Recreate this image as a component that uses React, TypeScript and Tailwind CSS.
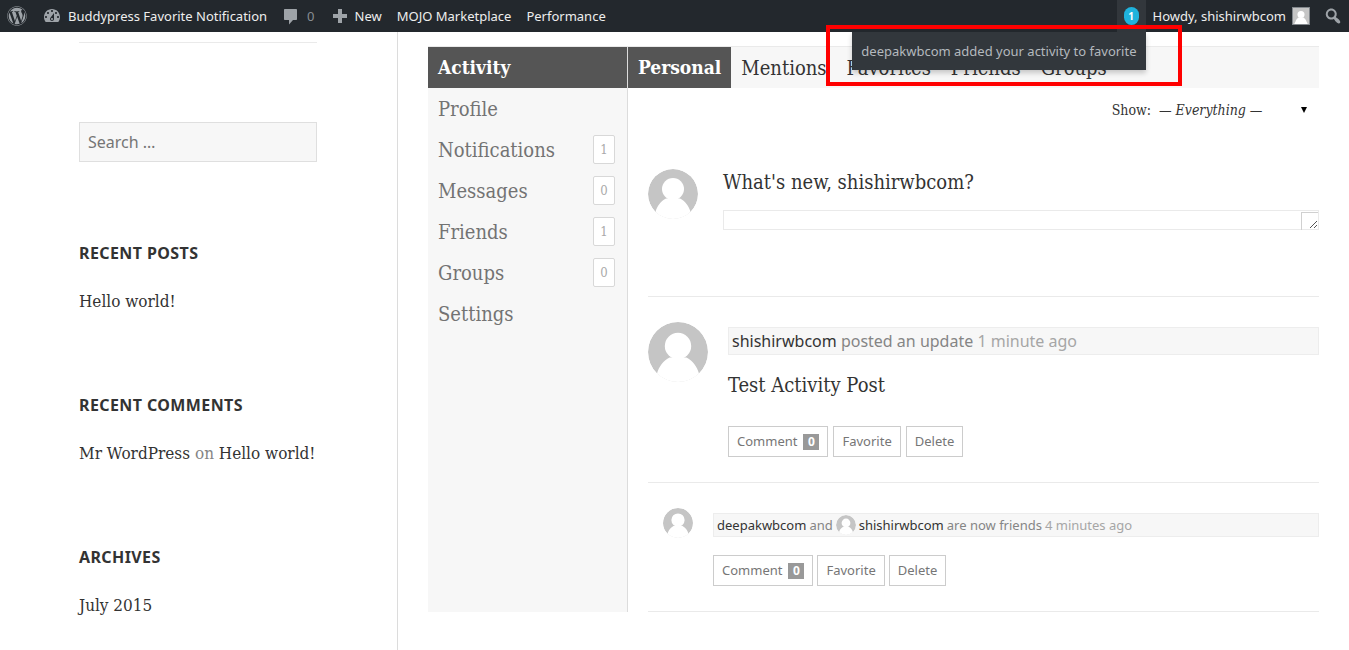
import { type ReactNode } from "react"
import { FaWordpress } from "react-icons/fa"

const navItems = [
  { label: "Profile" },
  { label: "Notifications", count: 1 },
  { label: "Messages", count: 0 },
  { label: "Friends", count: 1 },
  { label: "Groups", count: 0 },
  { label: "Settings" },
]

const subNavItems = ["Mentions", "Favorites", "Friends", "Groups"]

const dashboardPath =
  "M3.76 16h12.48c1.1-1.37 1.76-3.11 1.76-5 0-4.42-3.58-8-8-8s-8 3.58-8 8c0 1.89.66 3.63 1.76 5zM10 4c.55 0 1 .45 1 1s-.45 1-1 1-1-.45-1-1 .45-1 1-1zM6 6c.55 0 1 .45 1 1s-.45 1-1 1-1-.45-1-1 .45-1 1-1zm8 0c.55 0 1 .45 1 1s-.45 1-1 1-1-.45-1-1 .45-1 1-1zm-5.37 5.55L12 7v6c0 1.1-.9 2-2 2s-2-.9-2-2c0-.57.24-1.08.63-1.45zM4 10c.55 0 1 .45 1 1s-.45 1-1 1-1-.45-1-1 .45-1 1-1zm12 0c.55 0 1 .45 1 1s-.45 1-1 1-1-.45-1-1 .45-1 1-1zm-5 3c0-.55-.45-1-1-1s-1 .45-1 1 .45 1 1 1 1-.45 1-1z"
const commentPath = "M4 3h11c.6 0 1 .4 1 1v9c0 .6-.4 1-1 1h-3l-4 4.500V14H4c-.6 0-1-.4-1-1V4c0-.6.4-1 1-1z"
const plusPath = "M17 8v4h-5v5H8v-5H3V8h5V3h4v5z"
const searchPath =
  "M12.14 4.18c1.87 1.87 2.11 4.75.72 6.89.12.1.22.21.36.31.2.16.47.36.81.59.34.24.56.39.66.47.42.31.73.57.94.78.32.32.6.65.84 1 .25.35.44.69.59 1.04.14.35.21.68.18 1-.02.32-.14.59-.36.81s-.49.34-.81.36c-.31.02-.65-.04-.99-.19-.35-.14-.7-.34-1.04-.59-.35-.24-.68-.52-1-.84-.21-.21-.47-.52-.77-.93-.1-.13-.25-.35-.47-.66-.22-.32-.4-.57-.56-.78-.16-.2-.29-.35-.44-.5-2.07 1.09-4.69.76-6.44-.98-2.14-2.15-2.14-5.64 0-7.78 2.15-2.15 5.63-2.15 7.78 0zm-1.41 6.36c1.36-1.37 1.36-3.58 0-4.95-1.37-1.37-3.59-1.37-4.95 0-1.37 1.37-1.37 3.58 0 4.95 1.36 1.37 3.58 1.37 4.95 0z"

export default function App() {
  return (
    <div className="relative flex min-h-screen flex-col overflow-hidden bg-white font-['DejaVu_Serif_Condensed','DejaVu_Serif',serif] text-[#333]">
      <AdminBar />
      <div className="flex flex-1">
        <Sidebar />
        <main className="min-w-0 flex-1 pt-[14px] pr-[30px] pl-[30px]">
          <div className="flex border-t border-[#eaeaea]">
            <ProfileNav />
            <div className="min-w-0 flex-1">
              <SubNav />
              <div className="pl-5">
                <ActivityFilter />
                <WhatsNewForm />
                <ActivityStream />
              </div>
            </div>
          </div>
        </main>
      </div>
      {/* callout frame around the notification flyout */}
      <div className="pointer-events-none absolute top-[25px] right-[167px] z-20 h-[61px] w-[356px] border-4 border-[#ff0000]" />
    </div>
  )
}

function AdminBar() {
  return (
    <header className="z-10 flex h-8 items-center justify-between bg-[#23282d] pr-[6px] pl-[7px] font-['Noto_Sans',sans-serif] text-[13px] leading-8 text-[#eee]">
      <nav className="flex items-center" aria-label="Toolbar">
        <a href="#" aria-label="About WordPress">
          <FaWordpress className="size-5 text-[#9ea3a8]" />
        </a>
        <a href="#" className="ml-[15px] flex items-center gap-[6px]">
          <BarIcon d={dashboardPath} />
          Buddypress Favorite Notification
        </a>
        <a href="#" className="ml-[14px] flex items-center gap-[6px] text-[#888d92]">
          <BarIcon d={commentPath} />0
        </a>
        <a href="#" className="ml-[15px] flex items-center gap-[5px]">
          <BarIcon d={plusPath} />
          New
        </a>
        <a href="#" className="ml-[15px]">MOJO Marketplace</a>
        <a href="#" className="ml-[15px]">Performance</a>
      </nav>
      <div className="flex h-8 items-center">
        <div className="relative flex h-8 items-center bg-[#32373c] px-[7px]">
          <a href="#" className="grid h-[18px] w-[15px] place-items-center rounded-full bg-[#1fb3dd] text-[10px] leading-4 font-bold text-white">1</a>
          <a href="#" className="absolute top-full right-0 bg-[#32373c] px-[9px] py-[9px] leading-5 whitespace-nowrap text-[#b4b9be] shadow-[0_3px_5px_rgba(0,0,0,0.2)]">
            deepakwbcom added your activity to favorite
          </a>
        </div>
        <a href="#" className="ml-[7px] flex items-center gap-[6px]">
          Howdy, shishirwbcom
          <span className="border border-[#82878c] bg-[#c5c5c5]">
            <svg viewBox="0 0 50 50" className="size-4" aria-hidden="true">
              <Person />
            </svg>
          </span>
        </a>
        <button type="button" className="ml-[13px]" aria-label="Search site">
          <BarIcon d={searchPath} />
        </button>
      </div>
    </header>
  )
}

function BarIcon({ d }: { d: string }) {
  return (
    <svg viewBox="0 0 20 20" className="size-5 fill-[#9ea3a8]" aria-hidden="true">
      <path d={d} />
    </svg>
  )
}

function Sidebar() {
  return (
    <aside className="w-[398px] shrink-0 border-r border-[#dcdcdc] pt-[10px] pr-20 pl-[79px]">
      <hr className="border-[#eaeaea]" />
      <form className="mt-[79px]" role="search">
        <input
          type="search"
          aria-label="Search for"
          placeholder="Search …"
          className="h-10 w-full border border-[#dfdfdf] bg-[#f7f7f7] px-2 font-['Noto_Sans',sans-serif] text-base outline-none placeholder:text-[#757575]"
        />
      </form>
      <Widget title="Recent Posts">
        <a href="#">Hello world!</a>
      </Widget>
      <Widget title="Recent Comments">
        <a href="#">Mr WordPress</a> <span className="text-[#858585]">on</span> <a href="#">Hello world!</a>
      </Widget>
      <Widget title="Archives">
        <a href="#">July 2015</a>
      </Widget>
    </aside>
  )
}

function Widget({ title, children }: { title: string; children: ReactNode }) {
  return (
    <section className="mt-[79px]">
      <h2 className="font-['Noto_Sans',sans-serif] text-base leading-6 font-bold tracking-wide uppercase">{title}</h2>
      <p className="mt-6 text-[17px] leading-[25px] whitespace-nowrap">{children}</p>
    </section>
  )
}

function ProfileNav() {
  return (
    <nav className="w-[200px] shrink-0 border-r border-[#dcdcdc] bg-[#f7f7f7]" aria-label="Profile">
      <a href="#" className="flex h-[41px] items-center bg-[#555] px-[10px] text-[19px] font-bold text-white">Activity</a>
      {navItems.map((item) => (
        <a key={item.label} href="#" className="flex h-[41px] items-center justify-between pr-3 pl-[10px] text-xl text-[#737373]">
          {item.label}
          {item.count !== undefined && (
            <span className="flex h-[29px] w-[22px] items-center justify-center rounded-xs border border-[#d8d8d8] bg-white text-[13px] leading-6 text-[#aaa]">{item.count}</span>
          )}
        </a>
      ))}
    </nav>
  )
}

function SubNav() {
  return (
    <nav className="flex h-[41px] items-center bg-[#f7f7f7] text-xl" aria-label="Activity">
      <a href="#" className="flex h-full items-center bg-[#555] px-[10px] text-[19px] font-bold text-white">Personal</a>
      {subNavItems.map((label) => (
        <a key={label} href="#" className="px-[10px] text-[#333]">{label}</a>
      ))}
    </nav>
  )
}

function ActivityFilter() {
  return (
    <div className="flex h-11 items-center justify-end text-sm">
      <label htmlFor="activity-filter">Show:</label>
      <div className="relative ml-2 w-40">
        <select id="activity-filter" className="w-full appearance-none bg-transparent italic outline-none">
          <option>— Everything —</option>
        </select>
        <svg viewBox="0 0 6 6" className="pointer-events-none absolute top-1/2 right-3 size-[6px] -translate-y-1/2 fill-black" aria-hidden="true">
          <path d="M0 0h6L3 6z" />
        </svg>
      </div>
    </div>
  )
}

function WhatsNewForm() {
  return (
    <form className="mt-[37px] flex border-b border-[#eaeaea] pb-[66px]">
      <Avatar className="size-[50px]" />
      <div className="ml-[25px] min-w-0 flex-1">
        <label htmlFor="whats-new" className="block text-xl leading-[27px]">What's new, shishirwbcom?</label>
        <div className="relative mt-[14px]">
          <textarea id="whats-new" rows={1} className="block h-5 w-full resize-none border border-[#eaeaea] px-2 text-xs outline-none" />
          <svg viewBox="0 0 18 18" className="pointer-events-none absolute right-0 bottom-0 size-[18px] fill-none" shapeRendering="crispEdges" aria-hidden="true">
            <path d="M.5 18V.5H17" stroke="#d0d0d0" />
            <path d="M9 16l7-7M13 16l3-3" stroke="#555" />
          </svg>
        </div>
      </div>
    </form>
  )
}

function ActivityStream() {
  return (
    <ul>
      <li className="flex border-b border-[#eaeaea] py-[25px]">
        <Avatar className="size-[60px]" />
        <div className="mt-[5px] ml-5 min-w-0 flex-1">
          <p className="border border-[#ededed] bg-[#f7f7f7] px-[3px] font-['Noto_Sans',sans-serif] text-base leading-[26px] text-[#858585]">
            <a href="#" className="text-[#333]">shishirwbcom</a> posted an update <a href="#" className="text-[#a6a6a6]">1 minute ago</a>
          </p>
          <p className="mt-4 text-xl leading-7">Test Activity Post</p>
          <ActivityActions className="mt-[27px] gap-[5px]" />
        </div>
      </li>
      <li className="flex border-b border-[#eaeaea] py-[25px] pl-[15px]">
        <Avatar className="size-[30px]" />
        <div className="mt-[5px] ml-5 min-w-0 flex-1">
          <p className="flex h-6 items-center gap-[3px] border border-[#ededed] bg-[#f7f7f7] px-[3px] font-['Noto_Sans',sans-serif] text-[13px] leading-5 text-[#858585]">
            <a href="#" className="text-[#333]">deepakwbcom</a>
            and
            <Avatar className="size-5" />
            <a href="#" className="text-[#333]">shishirwbcom</a>
            are now friends
            <a href="#" className="text-[#a6a6a6]">4 minutes ago</a>
          </p>
          <ActivityActions className="mt-[18px] gap-1" />
        </div>
      </li>
    </ul>
  )
}

function ActivityActions({ className }: { className: string }) {
  const button = "flex h-[31px] items-center border border-[#ccc] bg-white px-2 text-[#767676]"

  return (
    <div className={`flex font-['Noto_Sans',sans-serif] text-[13px] ${className}`}>
      <button type="button" className={button}>
        Comment
        <span className="ml-[6px] grid h-4 w-4 place-items-center bg-[#999] text-xs font-bold text-white">0</span>
      </button>
      <button type="button" className={button}>Favorite</button>
      <button type="button" className={button}>Delete</button>
    </div>
  )
}

function Avatar({ className }: { className: string }) {
  return (
    <span className={`shrink-0 overflow-hidden rounded-full ${className}`}>
      <svg viewBox="0 0 50 50" className="size-full" aria-hidden="true">
        <circle cx="25" cy="25" r="25" fill="#c5c5c5" />
        <Person />
      </svg>
    </span>
  )
}

function Person() {
  return (
    <g fill="#fff">
      <circle cx="25" cy="20" r="11" />
      <path d="M18 29.500C13 32 9 37 7.500 43L4 50h42l-3.500-7C41 37 37 32 32 29.500z" />
    </g>
  )
}
